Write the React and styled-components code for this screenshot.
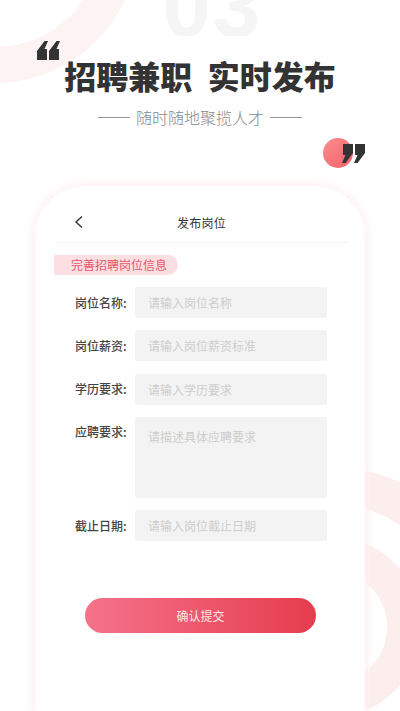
import React from "react";
import styled, { createGlobalStyle } from "styled-components";

const Global = createGlobalStyle`
  html, body { margin: 0; padding: 0; background: #fff; }
  body { font-family: "Noto Sans CJK SC", "Liberation Sans", sans-serif; }
`;

const Page = styled.div`
  position: relative;
  width: 400px;
  height: 711px;
  overflow: hidden;
  background: #fff;
`;

const Rings = styled.svg`
  position: absolute;
  left: 0;
  top: 0;
  width: 400px;
  height: 711px;
`;

const Hero = styled.header`
  position: relative;
  height: 186px;
`;

const Number = styled.div`
  height: 36px;
  overflow: hidden;
  display: flex;
  justify-content: center;
  align-items: flex-end;
  padding-left: 25px;
  color: #f5f5f5;
  font-family: "Liberation Sans", sans-serif;
  font-weight: 700;
  font-size: 86px;
  letter-spacing: 2px;
  line-height: 60px;
`;

const Headline = styled.h1`
  margin: 20px 0 0;
  text-align: center;
  font-size: 32px;
  line-height: 38px;
  font-weight: 900;
  word-spacing: 8px;
  color: #333;
  white-space: pre;
`;

const Subline = styled.div`
  margin-top: 13px;
  display: flex;
  justify-content: center;
  align-items: center;
  gap: 6px;
  font-size: 16px;
  font-weight: 300;
  line-height: 20px;
  color: #8a8a8a;
`;

const Rule = styled.span`
  width: 32px;
  height: 1px;
  background: #999;
`;

const Quote = styled.svg`
  position: absolute;
  width: 23px;
  height: 19px;
  fill: #333;
  left: ${(p) => p.$left}px;
  top: ${(p) => p.$top}px;
`;

const Dot = styled.div`
  position: absolute;
  left: 323px;
  top: 138px;
  width: 30px;
  height: 30px;
  border-radius: 50%;
  background: linear-gradient(135deg, #fb8f8f, #f45f68);
`;

const Phone = styled.section`
  position: relative;
  margin: 0 35px;
  height: 525px;
  box-sizing: border-box;
  padding: 3px 17px 0 16px;
  background: #fff;
  border-radius: 50px 50px 0 0;
  box-shadow: 0 0 9px 3px #fff0f1;
`;

const NavBar = styled.div`
  position: relative;
  height: 54px;
  box-sizing: border-box;
  padding-top: 14px;
  margin-left: 4px;
  display: flex;
  align-items: center;
  justify-content: center;
  border-bottom: 1px solid #f6f6f6;
  font-size: 12px;
  letter-spacing: 0.2px;
  color: #333;
`;

const Back = styled.svg`
  position: absolute;
  left: 19px;
  top: 26px;
  width: 10px;
  height: 14px;
  fill: none;
  stroke: #333;
  stroke-width: 1.4;
`;

const Banner = styled.div`
  margin: 12px 0 12px 3px;
  width: 124px;
  height: 20px;
  box-sizing: border-box;
  padding-left: 17px;
  border-radius: 0 10px 10px 0;
  background: #fbdfe3;
  color: #e8566c;
  font-size: 12px;
  line-height: 20px;
`;

const Form = styled.div`
  display: flex;
  flex-direction: column;
  gap: 12.33px;
  padding-left: 24px;
`;

const Row = styled.div`
  display: flex;
  align-items: ${(p) => (p.$tall ? "flex-start" : "center")};
`;

const Label = styled.label`
  width: 60px;
  font-size: 12px;
  font-weight: 500;
  line-height: ${(p) => (p.$tall ? "29px" : "18px")};
  color: #444;
`;

const Field = styled.div`
  width: 192px;
  height: ${(p) => (p.$tall ? 81 : 31)}px;
  box-sizing: border-box;
  padding-left: 13px;
  background: #f3f3f3;
  border-radius: 2px;
  color: #cdcdcd;
  font-size: 12px;
  line-height: ${(p) => (p.$tall ? 40 : 31)}px;
`;

const Submit = styled.button`
  display: block;
  margin: 57px 0 0 34px;
  width: 231px;
  height: 35px;
  border: 0;
  padding: 0;
  border-radius: 18px;
  background: linear-gradient(90deg, #f4738b, #e63c4e);
  color: #fde6e8;
  font-family: inherit;
  font-size: 12px;
`;

const fields = [
  { label: "岗位名称:", hint: "请输入岗位名称" },
  { label: "岗位薪资:", hint: "请输入岗位薪资标准" },
  { label: "学历要求:", hint: "请输入学历要求" },
  { label: "应聘要求:", hint: "请描述具体应聘要求", tall: true },
  { label: "截止日期:", hint: "请输入岗位截止日期" },
];

// wedge shaped quote marks, the closing pair is the opening pair turned round
const openQuote = "M0 19V10L7.500 0H11L7.500 8H10V19ZM12 19V10L19.500 0H23L19.500 8H22V19Z";
const closeQuote = "M23 0V9L15.500 19H12L15.500 11H13V0ZM11 0V9L3.500 19H0L3.500 11H1V0Z";

export default function App() {
  return (
    <Page>
      <Global />
      <Rings viewBox="0 0 400 711">
        <circle cx="-5" cy="-60" r="125" fill="none" stroke="#fdf3f3" strokeWidth="36" />
        <circle cx="330" cy="627" r="74" fill="none" stroke="#fdeeee" strokeWidth="34" />
        <circle cx="330" cy="627" r="142" fill="none" stroke="#fdeeee" strokeWidth="37" />
      </Rings>
      <Hero>
        <Number>03</Number>
        <Headline>{"招聘兼职 实时发布"}</Headline>
        <Subline>
          <Rule />
          随时随地聚揽人才
          <Rule />
        </Subline>
        <Quote $left={37} $top={41} viewBox="0 0 23 19"><path d={openQuote} /></Quote>
        <Dot />
        <Quote $left={342} $top={144} viewBox="0 0 23 19"><path d={closeQuote} /></Quote>
      </Hero>
      <Phone>
        <NavBar>
          <Back viewBox="0 0 10 14"><path d="M8 1.500L2 7l6 5.500" /></Back>
          发布岗位
        </NavBar>
        <Banner>完善招聘岗位信息</Banner>
        <Form>
          {fields.map((f) => (
            <Row key={f.label} $tall={f.tall}>
              <Label $tall={f.tall}>{f.label}</Label>
              <Field $tall={f.tall}>{f.hint}</Field>
            </Row>
          ))}
        </Form>
        <Submit>确认提交</Submit>
      </Phone>
    </Page>
  );
}
